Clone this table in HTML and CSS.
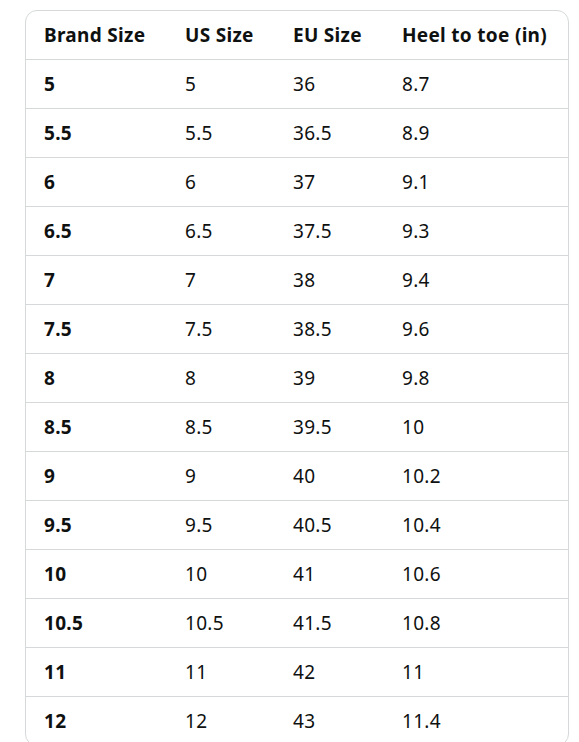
FILE: index.html
```html
<!DOCTYPE html>
<html>
<head>
<meta charset="utf-8">
<link rel="stylesheet" href="styles.css">
</head>
<body>
<div class="wrap">
<table class="size-table">
<colgroup><col class="c1"><col class="c2"><col class="c3"><col class="c4"></colgroup>
<thead>
<tr><th>Brand Size</th><th>US Size</th><th>EU Size</th><th>Heel to toe (in)</th></tr>
</thead>
<tbody>
<tr><td class="b">5</td><td>5</td><td>36</td><td>8.7</td></tr>
<tr><td class="b">5.5</td><td>5.5</td><td>36.5</td><td>8.9</td></tr>
<tr><td class="b">6</td><td>6</td><td>37</td><td>9.1</td></tr>
<tr><td class="b">6.5</td><td>6.5</td><td>37.5</td><td>9.3</td></tr>
<tr><td class="b">7</td><td>7</td><td>38</td><td>9.4</td></tr>
<tr><td class="b">7.5</td><td>7.5</td><td>38.5</td><td>9.6</td></tr>
<tr><td class="b">8</td><td>8</td><td>39</td><td>9.8</td></tr>
<tr><td class="b">8.5</td><td>8.5</td><td>39.5</td><td>10</td></tr>
<tr><td class="b">9</td><td>9</td><td>40</td><td>10.2</td></tr>
<tr><td class="b">9.5</td><td>9.5</td><td>40.5</td><td>10.4</td></tr>
<tr><td class="b">10</td><td>10</td><td>41</td><td>10.6</td></tr>
<tr><td class="b">10.5</td><td>10.5</td><td>41.5</td><td>10.8</td></tr>
<tr><td class="b">11</td><td>11</td><td>42</td><td>11</td></tr>
<tr><td class="b">12</td><td>12</td><td>43</td><td>11.4</td></tr>
</tbody>
</table>
</div>
</body>
</html>
```
FILE: styles.css
```css
html, body { margin: 0; padding: 0; background: #fff; }
body { font-family: "Noto Sans", "Open Sans", sans-serif; color: #0f1111; }
.wrap { padding: 10px 0 0 25px; }
.size-table {
  width: 544px;
  border: 1px solid #d5d9d9;
  border-radius: 12px;
  border-collapse: separate;
  border-spacing: 0;
  table-layout: fixed;
}
.c1 { width: 141px; }
.c2 { width: 108px; }
.c3 { width: 109px; }
.c4 { width: auto; }
.size-table th, .size-table td {
  height: 48px;
  padding: 0 0 0 18px;
  text-align: left;
  vertical-align: middle;
  font-size: 19px;
  line-height: 24px;
  letter-spacing: 0.3px;
  border-bottom: 1px solid #d5d9d9;
  white-space: nowrap;
}
.size-table th { font-weight: 700; }
.size-table td { font-weight: 400; }
.size-table td.b { font-weight: 700; }
.size-table tbody tr:last-child td { border-bottom: none; }
```
